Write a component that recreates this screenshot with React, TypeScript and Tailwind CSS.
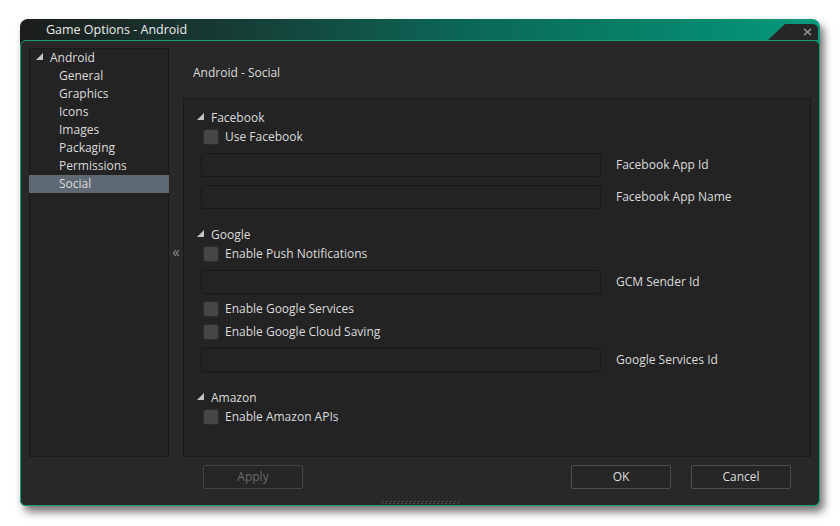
import React from "react";

const font = { fontFamily: '"Open Sans", "Noto Sans", sans-serif' };

function Tri() {
  return (
    <svg width="7" height="7" viewBox="0 0 7 7" className="shrink-0">
      <polygon points="7,0 7,7 0,7" fill="#c4c4c4" />
    </svg>
  );
}

function SectionHeader({ title }: { title: string }) {
  return (
    <div className="flex h-[19px] items-center">
      <div className="w-[14px] pb-[3px]">
        <Tri />
      </div>
      <span>{title}</span>
    </div>
  );
}

function Check({ label, className = "" }: { label: string; className?: string }) {
  return (
    <div className={`flex h-[19px] items-center pl-[6px] ${className}`}>
      <div className="h-[16px] w-[16px] rounded-[3px] border border-[#2c2c2c] bg-[#464646]" />
      <span className="ml-[6px]">{label}</span>
    </div>
  );
}

function Field({ label, className = "" }: { label: string; className?: string }) {
  return (
    <div className={`flex items-center pl-[4px] ${className}`}>
      <div className="h-[24px] w-[400px] rounded-[2px] border border-[#191919] bg-[#232323]" />
      <span className="ml-[15px]">{label}</span>
    </div>
  );
}

function Btn({ label, disabled }: { label: string; disabled?: boolean }) {
  return (
    <div
      className={`flex h-[24px] w-[100px] items-center justify-center rounded-[2px] border bg-[#262626] ${
        disabled ? "border-[#444] text-[#6a6a6a]" : "border-[#4e4e4e] text-[#dedede]"
      }`}
    >
      {label}
    </div>
  );
}

const treeItems = ["General", "Graphics", "Icons", "Images", "Packaging", "Permissions", "Social"];

export default function App() {
  return (
    <div className="min-h-screen bg-white pl-[20px] pt-[19px] text-[12px] text-[#dcdcdc]" style={font}>
      <div className="relative w-[800px] rounded-t-[8px] rounded-b-[6px] bg-[linear-gradient(90deg,#1c1c1c_0%,#173a33_25%,#0b6655_55%,#049a7b_100%)] shadow-[4px_6px_8px_rgba(0,0,0,0.55)]">
        {/* title bar */}
        <div className="flex h-[21px] items-center pl-[26px] pt-[2px] text-[12.5px] text-[#ececec]">
          Game Options - Android
        </div>
        <svg className="absolute right-[2px] top-[5px]" width="50" height="16" viewBox="0 0 50 16">
          <path d="M0 16 L17 0 L44 0 Q50 0 50 6 L50 16 Z" fill="#262626" />
          <path d="M36 5 L43 11 M43 5 L36 11" stroke="#9a9a9a" strokeWidth="1.6" />
        </svg>

        {/* body */}
        <div className="flex h-[466px] flex-col rounded-[6px] border border-[#17a070] bg-[#282828] px-[8px] pt-[7px]">
          <div className="flex h-[409px]">
            {/* tree */}
            <div className="w-[140px] border border-[#1a1a1a] bg-[#232323]">
              <div className="flex h-[18px] items-center pl-[6px]">
                <div className="w-[14px] pb-[3px]">
                  <Tri />
                </div>
                <span>Android</span>
              </div>
              {treeItems.map((t) => (
                <div
                  key={t}
                  className={`flex h-[18px] items-center ${t === "Social" ? "-mx-px bg-[#5e6974] pl-[30px]" : "pl-[29px]"}`}
                >
                  {t}
                </div>
              ))}
            </div>

            {/* collapse strip */}
            <div className="flex w-[14px] items-center justify-center pb-[2px] text-[15px] text-[#8a8a8a]">«</div>

            {/* content */}
            <div className="flex flex-1 flex-col">
              <div className="flex h-[50px] items-center pl-[10px]">Android - Social</div>
              <div className="flex-1 border border-[#1a1a1a] bg-[#232323] pl-[13px] pt-[9px]">
                <SectionHeader title="Facebook" />
                <Check label="Use Facebook" />
                <Field label="Facebook App Id" className="mt-[7px]" />
                <Field label="Facebook App Name" className="mt-[8px]" />

                <div className="mt-[16px]">
                  <SectionHeader title="Google" />
                </div>
                <Check label="Enable Push Notifications" />
                <Field label="GCM Sender Id" className="mt-[7px]" />
                <Check label="Enable Google Services" className="mt-[5px]" />
                <Check label="Enable Google Cloud Saving" className="mt-[4px]" />
                <Field label="Google Services Id" className="mt-[7px]" />

                <div className="mt-[16px]">
                  <SectionHeader title="Amazon" />
                </div>
                <Check label="Enable Amazon APIs" />
              </div>
            </div>
          </div>

          {/* buttons */}
          <div className="mt-[8px] flex items-center pl-[174px] pr-[20px]">
            <Btn label="Apply" disabled />
            <div className="flex-1" />
            <Btn label="OK" />
            <div className="w-[20px]" />
            <Btn label="Cancel" />
          </div>

          {/* grip */}
          <div className="mt-[12px] flex justify-center">
            <div className="flex flex-col gap-px">
              <div className="flex gap-[2px] pl-[1px]">
                {Array.from({ length: 20 }).map((_, i) => (
                  <div key={i} className="h-px w-[2px] bg-[#4a4a4a]" />
                ))}
              </div>
              <div className="flex gap-[2px]">
                {Array.from({ length: 20 }).map((_, i) => (
                  <div key={i} className="h-px w-[2px] bg-[#4a4a4a]" />
                ))}
              </div>
            </div>
          </div>
        </div>
      </div>
    </div>
  );
}
